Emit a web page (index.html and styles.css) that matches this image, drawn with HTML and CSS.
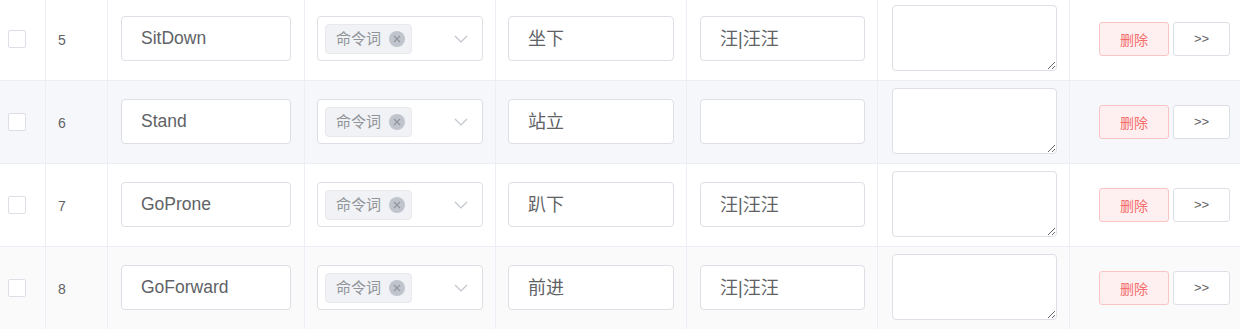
FILE: index.html
```html
<!DOCTYPE html>
<html>
<head>
<meta charset="utf-8">
<link rel="stylesheet" href="styles.css">
</head>
<body>
<div class="table">
  <div class="row">
    <div class="cell c1"><span class="checkbox"></span></div>
    <div class="cell c2">5</div>
    <div class="cell c3"><div class="input en">SitDown</div></div>
    <div class="cell c4"><div class="select"><span class="tag"><span class="tag-text">命令词</span><svg class="close" viewBox="0 0 16 16" width="16" height="16"><circle cx="8" cy="8" r="8" fill="#c0c4cc"/><path d="M5 5 L11 11 M11 5 L5 11" stroke="#909399" stroke-width="1.1" fill="none"/></svg></span><svg class="arrow" viewBox="0 0 14 8" width="14" height="8"><path d="M1 1 L7 7 L13 1" fill="none" stroke="#c0c4cc" stroke-width="1.2"/></svg></div></div>
    <div class="cell c5"><div class="input cn">坐下</div></div>
    <div class="cell c6"><div class="input cn">汪|汪汪</div></div>
    <div class="cell c7"><textarea class="textarea"></textarea></div>
    <div class="cell c8"><button class="btn danger">删除</button><button class="btn plain">&gt;&gt;</button></div>
  </div>
  <div class="row hover">
    <div class="cell c1"><span class="checkbox"></span></div>
    <div class="cell c2">6</div>
    <div class="cell c3"><div class="input en">Stand</div></div>
    <div class="cell c4"><div class="select"><span class="tag"><span class="tag-text">命令词</span><svg class="close" viewBox="0 0 16 16" width="16" height="16"><circle cx="8" cy="8" r="8" fill="#c0c4cc"/><path d="M5 5 L11 11 M11 5 L5 11" stroke="#909399" stroke-width="1.1" fill="none"/></svg></span><svg class="arrow" viewBox="0 0 14 8" width="14" height="8"><path d="M1 1 L7 7 L13 1" fill="none" stroke="#c0c4cc" stroke-width="1.2"/></svg></div></div>
    <div class="cell c5"><div class="input cn">站立</div></div>
    <div class="cell c6"><div class="input cn"></div></div>
    <div class="cell c7"><textarea class="textarea"></textarea></div>
    <div class="cell c8"><button class="btn danger">删除</button><button class="btn plain">&gt;&gt;</button></div>
  </div>
  <div class="row">
    <div class="cell c1"><span class="checkbox"></span></div>
    <div class="cell c2">7</div>
    <div class="cell c3"><div class="input en">GoProne</div></div>
    <div class="cell c4"><div class="select"><span class="tag"><span class="tag-text">命令词</span><svg class="close" viewBox="0 0 16 16" width="16" height="16"><circle cx="8" cy="8" r="8" fill="#c0c4cc"/><path d="M5 5 L11 11 M11 5 L5 11" stroke="#909399" stroke-width="1.1" fill="none"/></svg></span><svg class="arrow" viewBox="0 0 14 8" width="14" height="8"><path d="M1 1 L7 7 L13 1" fill="none" stroke="#c0c4cc" stroke-width="1.2"/></svg></div></div>
    <div class="cell c5"><div class="input cn">趴下</div></div>
    <div class="cell c6"><div class="input cn">汪|汪汪</div></div>
    <div class="cell c7"><textarea class="textarea"></textarea></div>
    <div class="cell c8"><button class="btn danger">删除</button><button class="btn plain">&gt;&gt;</button></div>
  </div>
  <div class="row striped">
    <div class="cell c1"><span class="checkbox"></span></div>
    <div class="cell c2">8</div>
    <div class="cell c3"><div class="input en">GoForward</div></div>
    <div class="cell c4"><div class="select"><span class="tag"><span class="tag-text">命令词</span><svg class="close" viewBox="0 0 16 16" width="16" height="16"><circle cx="8" cy="8" r="8" fill="#c0c4cc"/><path d="M5 5 L11 11 M11 5 L5 11" stroke="#909399" stroke-width="1.1" fill="none"/></svg></span><svg class="arrow" viewBox="0 0 14 8" width="14" height="8"><path d="M1 1 L7 7 L13 1" fill="none" stroke="#c0c4cc" stroke-width="1.2"/></svg></div></div>
    <div class="cell c5"><div class="input cn">前进</div></div>
    <div class="cell c6"><div class="input cn">汪|汪汪</div></div>
    <div class="cell c7"><textarea class="textarea"></textarea></div>
    <div class="cell c8"><button class="btn danger">删除</button><button class="btn plain">&gt;&gt;</button></div>
  </div>
</div>
</body>
</html>
```

FILE: styles.css
```css
* { box-sizing: border-box; }
html, body { margin: 0; padding: 0; background: #fff; }
body {
  font-family: "Liberation Sans", "Noto Sans CJK SC", sans-serif;
  color: #606266;
  overflow: hidden;
}
.table { margin-top: -2px; }
.row {
  display: grid;
  grid-template-columns: 46px 62px 197px 191px 191px 191px 192px 170px;
  height: 83px;
  border-bottom: 1px solid #ebeef5;
  background: #fff;
}
.row.hover { background: #f5f7fa; }
.row.striped { background: #fafafa; }
.cell {
  border-right: 1px solid #ebeef5;
  display: flex;
  align-items: center;
  font-size: 14px;
  padding-bottom: 1px;
}
.cell.c8 { border-right: none; }
.c1 { padding-left: 8px; }
.c2 { padding-left: 12px; padding-top: 1px; padding-bottom: 0; }
.c3 { padding-left: 13px; }
.c4 { padding-left: 12px; }
.c5 { padding-left: 12px; }
.c6 { padding-left: 13px; }
.c7 { padding-left: 14px; padding-bottom: 2px; }
.c8 { padding-left: 29px; }
.checkbox {
  width: 18px; height: 18px;
  border: 1px solid #dcdfe6;
  border-radius: 2px;
  background: #fff;
}
.input {
  width: 170px; height: 45px;
  border: 1px solid #dcdfe6;
  border-radius: 4px;
  background: #fff;
  padding-left: 19px;
  display: flex; align-items: center;
  font-size: 18px;
  color: #606266;
}
.input.en { font-size: 17.5px; padding-left: 19px; }
.c5 .input { width: 166px; }
.c6 .input { width: 165px; }
.input.cn { font-size: 18px; padding-left: 19px; padding-bottom: 3px; }
.select {
  width: 166px; height: 45px;
  border: 1px solid #dcdfe6;
  border-radius: 4px;
  background: #fff;
  display: flex; align-items: center;
  padding-left: 7px;
  padding-right: 14px;
  justify-content: space-between;
}
.tag {
  height: 30px;
  width: 87px;
  background: #f0f2f5;
  border: 1px solid #e9e9eb;
  border-radius: 4px;
  color: #909399;
  font-size: 15px;
  display: flex; align-items: center;
  padding-left: 10px;
}
.tag-text { position: relative; top: -1px; }
.close {
  display: block;
  margin-left: 8px;
}
.arrow { display: block; }
.textarea {
  width: 165px; height: 66px;
  border: 1px solid #dcdfe6;
  border-radius: 4px;
  background: #fff;
  resize: vertical;
  margin: 0;
  padding: 5px 15px;
  font-family: inherit;
  outline: none;
}
.btn {
  height: 34px;
  border-radius: 3px;
  font-size: 14px;
  font-family: "Liberation Sans", "Noto Sans CJK SC", sans-serif;
  padding: 0;
  margin: 0;
  cursor: pointer;
}
.btn.danger {
  width: 70px;
  background: #fef0f0;
  border: 1px solid #fbc4c4;
  color: #f56c6c;
}
.btn.plain {
  width: 57px;
  margin-left: 4px;
  background: #fff;
  border: 1px solid #dcdfe6;
  color: #606266;
  font-size: 13px;
}
```
